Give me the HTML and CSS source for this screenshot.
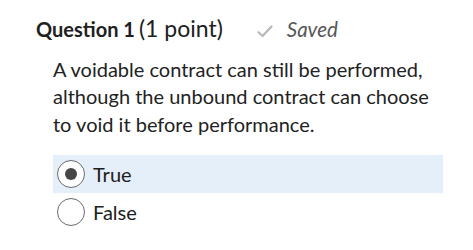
FILE: index.html
```html
<!DOCTYPE html>
<html>
<head>
<meta charset="utf-8">
<link rel="stylesheet" href="styles.css">
</head>
<body>
<div class="page">
  <div class="header">
    <span class="qtitle">Question 1</span>
    <span class="points">(1 point)</span>
    <span class="saved">
      <svg class="check" width="16" height="13" viewBox="0 0 16 13"><path d="M1.5 7.2 L5.6 11 L14.5 1.5" fill="none" stroke="#b8b8b8" stroke-width="2.2" stroke-linecap="round" stroke-linejoin="round"/></svg>
      <span class="savedtext">Saved</span>
    </span>
  </div>
  <div class="body">
    <p class="prompt">A voidable contract can still be performed, although the unbound contract can choose to void it before performance.</p>
    <div class="options">
      <label class="option selected">
        <span class="radio checked"><span class="dot"></span></span>
        <span class="label">True</span>
      </label>
      <label class="option">
        <span class="radio"></span>
        <span class="label">False</span>
      </label>
    </div>
  </div>
</div>
</body>
</html>
```
FILE: styles.css
```css
html, body {
  margin: 0;
  padding: 0;
  background: #ffffff;
}
.page {
  width: 473px;
  height: 250px;
  font-family: Lato, "Open Sans", sans-serif;
  color: #222222;
}
.header {
  display: flex;
  align-items: baseline;
  padding: 14px 0 0 36px;
  height: 30px;
}
.qtitle {
  font-weight: 700;
  font-size: 20px;
  color: #202020;
}
.points {
  font-size: 23px;
  margin-left: 4px;
  color: #202020;
}
.saved {
  display: flex;
  align-items: baseline;
  margin-left: 34px;
}
.check {
  position: relative;
  top: 1px;
}
.savedtext {
  font-style: italic;
  font-size: 20.5px;
  color: #565656;
  margin-left: 14px;
}
.body {
  padding: 11.5px 0 0 53px;
}
.prompt {
  margin: 0;
  font-size: 20px;
  line-height: 27.5px;
  width: 390px;
  color: #222222;
}
.options {
  margin-top: 17px;
  width: 390px;
}
.option {
  display: flex;
  align-items: center;
  height: 38px;
  padding-left: 4px;
}
.option.selected {
  background: #e5eff9;
}
.radio {
  box-sizing: border-box;
  width: 28px;
  height: 28px;
  border: 1.5px solid #6a6a6a;
  border-radius: 50%;
  background: #ffffff;
  display: flex;
  align-items: center;
  justify-content: center;
}
.dot {
  width: 12px;
  height: 12px;
  border-radius: 50%;
  background: #464646;
}
.label {
  font-size: 20px;
  margin-left: 8px;
  color: #202020;
}
```
